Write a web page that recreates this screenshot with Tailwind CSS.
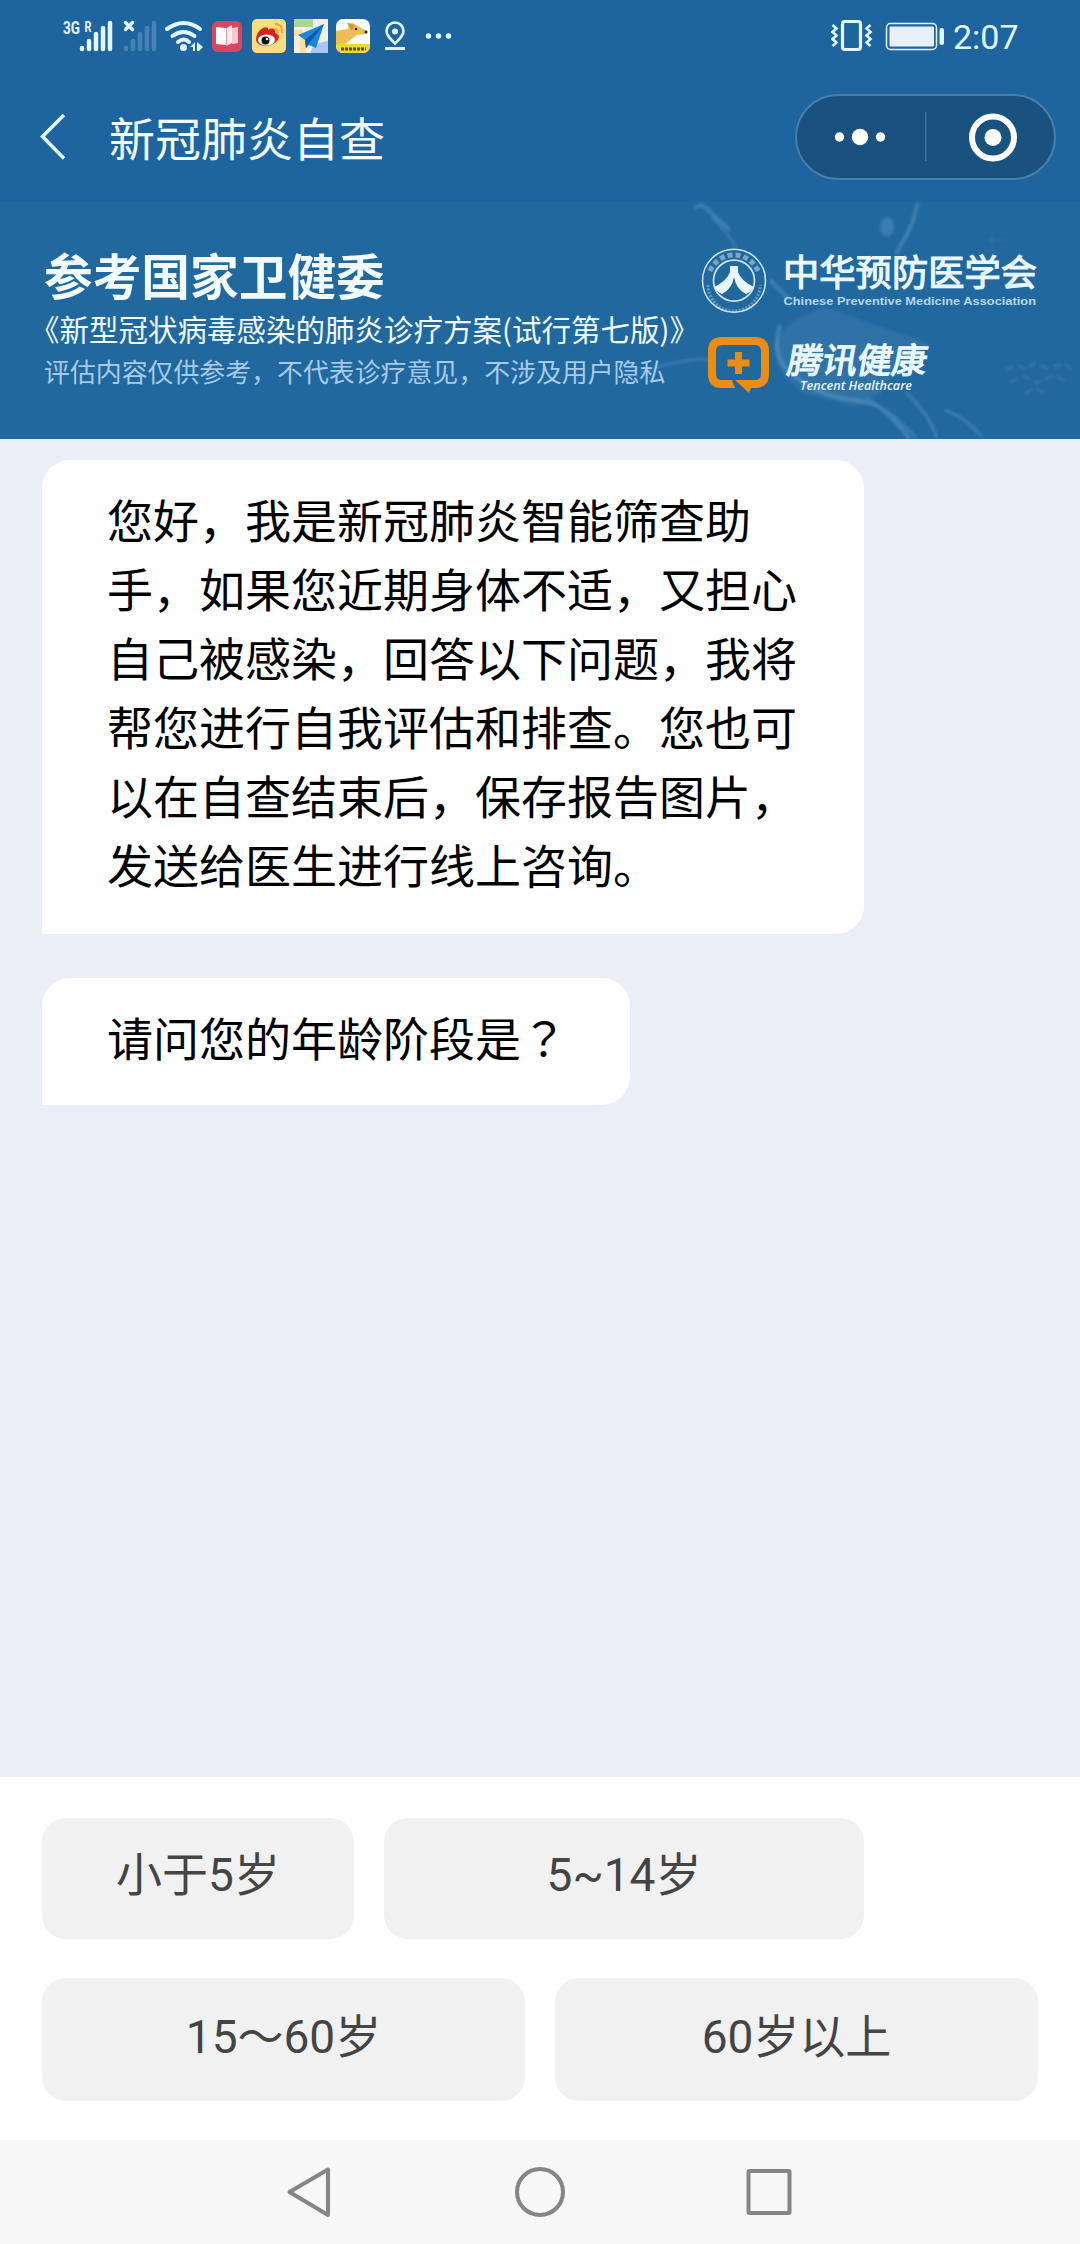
<!DOCTYPE html>
<html lang="zh-CN">

<head>
  <meta charset="UTF-8">
  <title>新冠肺炎自查</title>
  <script src="https://cdn.jsdelivr.net/npm/@tailwindcss/browser@4"></script>
</head>

<body class="bg-[#ebeef6] font-['Noto_Sans_CJK_SC',sans-serif]">
  <div class="w-[1080px] h-[2244px] flex flex-col overflow-hidden">

    <header class="h-[201px] shrink-0 bg-[#1e659f] text-[#f0faff]">
      <!-- status bar -->
      <div class="h-[72px] flex items-center justify-between pl-[60px] pr-[60px]">
        <svg width="396" height="72" viewBox="60 0 396 72" fill="#e2f6ff">
          <g font-family="Roboto" font-weight="700">
            <text x="63" y="34" font-size="18" textLength="17" lengthAdjust="spacingAndGlyphs">3G</text>
            <text x="84.500" y="32" font-size="15" textLength="7" lengthAdjust="spacingAndGlyphs">R</text>
          </g>
          <g stroke="#e2f6ff" stroke-width="4.500" stroke-linecap="round">
            <path d="M82 48v1M89 41v8M96 34v15M103 28v21M110 23v26" />
            <path d="M126 48v1M133 41v8M140 34v15M147 28v21M154 23v26" stroke="#4482b8" />
            <path d="M125.500 22.500l7 7M132.500 22.500l-7 7" stroke-width="3.500" />
          </g>
          <g fill="none" stroke="#e2f6ff" stroke-width="4" stroke-linecap="round">
            <path d="M167 29q17-12 33 0M172.500 36q11-8 22 0M178 42q6-5 11 0" />
          </g>
          <circle cx="183.500" cy="47.500" r="3.500" />
          <path d="M190 47l5-5v9h-2v-4zM197 42l6 5-4 4h-2z" />
          <!-- book -->
          <rect x="212" y="21" width="30" height="31" rx="6" fill="#d9465f" />
          <path d="M216 27l10 1v17l-10-1z" fill="#fff" />
          <path d="M226.500 28l5.500-3v18l-5.500 3z" fill="#fdebee" />
          <path d="M232 28l6-1v16l-6 1z" fill="#f9c9d0" />
          <!-- weibo -->
          <rect x="252" y="19" width="34" height="34" rx="5" fill="#fbdc80" />
          <path d="M263 28c4-2 6 0 5 2 4-3 8-1 7 3 5 1 5 6 1 9-6 6-19 5-20-2 0-5 3-10 7-12z" fill="#d8251c" />
          <ellipse cx="266.500" cy="40" rx="8.500" ry="5.500" fill="#fff" />
          <circle cx="265.500" cy="40.500" r="4" fill="#111" />
          <circle cx="267" cy="39" r="1.200" fill="#fff" />
          <path d="M274 29q4 0 4 4M275 24q8 0 7 9" fill="none" stroke="#eda63a" stroke-width="2" />
          <!-- map -->
          <rect x="294" y="19" width="34" height="34" fill="#f1efe6" />
          <path d="M294 19h19v8h-19z" fill="#a9d98d" />
          <path d="M294 33h9M303 53V34" stroke="#fbdf9b" stroke-width="6" />
          <path d="M314 44l14-3v12h-18z" fill="#a8c8f2" />
          <path d="M298 35l26-11-8 24-7-3-3 3-1-8z" fill="#1d86e0" />
          <path d="M305 40l19-16-14 18-4 6z" fill="#1258a8" />
          <!-- dog -->
          <rect x="336" y="19" width="34" height="34" rx="7" fill="#fffdf6" />
          <path d="M336 31l12-2c0-6 4-7 8-4l11 6-1 3-9 1-12 9h-9z" fill="#eebd55" />
          <path d="M347 23q5 0 8 3l-3 5z" fill="#cf9836" />
          <circle cx="356" cy="29" r="1.200" fill="#222" />
          <circle cx="366" cy="32" r="1.500" fill="#222" />
          <path d="M336 44h34v2a7 7 0 0 1-7 7h-20a7 7 0 0 1-7-7z" fill="#eadb31" />
          <path d="M341 49h25" stroke="#5d5218" stroke-width="3" stroke-dasharray="3 1" />
          <!-- location -->
          <path d="M395 43.500c-5-5-8.500-8-8.500-12.500a8.500 8.500 0 0 1 17 0c0 4.500-3.500 7.500-8.500 12.500z" fill="none"
            stroke="#e2f6ff" stroke-width="2.600" />
          <circle cx="395" cy="31.500" r="3" />
          <rect x="385" y="47" width="20" height="3" />
          <circle cx="428.500" cy="36" r="2.700" />
          <circle cx="438.500" cy="36" r="2.700" />
          <circle cx="448.500" cy="36" r="2.700" />
        </svg>
        <div class="flex items-center gap-[8px]">
          <svg width="114" height="72" viewBox="831 0 114 72" fill="none" stroke="#e2f6ff">
            <rect x="842.500" y="21.500" width="18" height="28" rx="2.500" stroke-width="3.200" />
            <path d="M832.500 25l4 3.500-4 3.500 4 3.500-4 3.500 4 3.500-4 3.500M870.500 25l-4 3.500 4 3.500-4 3.500 4 3.500-4 3.500 4 3.500"
              stroke-width="2.600" />
            <rect x="886.500" y="23.500" width="50" height="26" rx="4" stroke-width="1.500" />
            <rect x="889.500" y="26.500" width="44.500" height="20" rx="1" fill="#e8f0f6" stroke="none" />
            <rect x="939.500" y="28" width="4.500" height="17" rx="2" fill="#e2f6ff" stroke="none" />
          </svg>
          <span class="font-[Roboto] text-[34px] leading-[72px] w-[67px] pt-[2px] text-[#e2f6ff]">2:07</span>
        </div>
      </div>
      <!-- title bar -->
      <div class="h-[129px] flex items-start pl-[38px] pr-[24px] pt-[22px]">
        <svg class="mt-[17px]" width="30" height="52" viewBox="38 111 30 52" fill="none" stroke="#e2f6ff" stroke-width="3.500">
          <path d="M64 115L42.500 136.500 64 158.500" />
        </svg>
        <h1 class="ml-[41px] mt-[8px] text-[46px] leading-[69px] font-normal">新冠肺炎自查</h1>
        <div
          class="ml-auto w-[261px] h-[86px] rounded-full bg-[#19527f] border-2 border-[#4a7fab] flex items-center">
          <svg width="257" height="82" viewBox="797 96 257 82" fill="#fff">
            <circle cx="839.500" cy="137" r="4.700" />
            <circle cx="860" cy="137" r="8.200" />
            <circle cx="880.500" cy="137" r="4.700" />
            <rect x="925" y="112" width="1.500" height="49" fill="#3f739f" />
            <circle cx="993" cy="137.500" r="21" fill="none" stroke="#fff" stroke-width="6" />
            <circle cx="993" cy="137.500" r="8.500" />
          </svg>
        </div>
      </div>
    </header>

    <!-- banner -->
    <section class="relative h-[238px] shrink-0 bg-[#21689f] text-[#f0faff] flex">
      <svg class="absolute left-[640px] top-0" width="440" height="238" viewBox="640 201 440 238" fill="none"
        stroke="#6ba5cf">
        <g class="blur-[1.5px]">
          <path d="M775 345q8-25 50-38l35 12 70 25-40 35-10 15-25 12-50-12q-32-20-30-49z" fill="#5f97c0"
            stroke="none" opacity=".22" />
          <g opacity=".45">
            <path d="M694 208q10-6 16 4l20 18M770 280l20 20M918 203q-6 25-14 36l-8 15" stroke-width="3.500" />
            <path d="M712 218q16 14 24 30M640 372q40-13 70-13" stroke-width="2" />
            <path d="M780 325q-12 35 20 55 25 18 55 20l20 5q12 5 35 34" stroke-width="4" />
            <path d="M866 398q32 18 50 40M905 392q22 18 32 46M945 410q22 8 38 28" stroke-width="2.500" />
          </g>
          <g opacity=".3">
            <path d="M1005 370l12-5 8 4 10-6 12 5 18-4 10 8M1010 382l14-6 12 7 18-8 12 6M1025 394l10-6 14 7"
              stroke-width="2.500" stroke-dasharray="9 4" />
            <path d="M985 240h22M992 232v22" stroke-width="1" />
          </g>
          <ellipse cx="887" cy="227" rx="7" ry="10" fill="#6ba5cf" opacity=".35" stroke="none" />
        </g>
      </svg>
      <div class="relative w-[694px] shrink-0 pl-[44px] pt-[37px] whitespace-nowrap">
        <p class="text-[48.700px] leading-[72px] font-bold">参考国家卫健委</p>
        <p class="text-[29.500px] leading-[36px] -ml-[14px]">《新型冠状病毒感染的肺炎诊疗方案(试行第七版)》</p>
        <p class="text-[25.900px] leading-[36px] mt-[7px] text-[#a6cbe9]">评估内容仅供参考，不代表诊疗意见，不涉及用户隐私</p>
      </div>
      <svg class="relative" width="386" height="238" viewBox="694 201 386 238" fill="#e8f6ff">
        <g fill="none" stroke="#cfe6f6">
          <circle cx="734" cy="280.700" r="31.500" stroke-width="1.500" />
          <path d="M710 271a26 26 0 0 1 48 0" stroke-width="5" stroke-dasharray="5 3" opacity=".5" />
          <path d="M708 285a26 26 0 0 0 52 0" stroke-width="3" stroke-dasharray="2 1.500" opacity=".4" />
          <circle cx="734" cy="280.700" r="20.500" stroke-width="1.700" />
        </g>
        <path d="M730 266h8v6q3 9 16 15-2 4-8 7-10-5-12-17-2 12-12 17-6-3-8-7 13-6 16-15z" />
        <text x="783" y="286" font-size="36.200" textLength="254" stroke="#e8f6ff" stroke-width="1.200">中华预防医学会</text>
        <text x="783.500" y="305" font-family="Liberation Sans" font-size="11.500" font-weight="700" textLength="252.500"
          lengthAdjust="spacingAndGlyphs" fill="#b5d6ee">Chinese Preventive Medicine Association</text>
        <path d="M731 384H722q-10 0-10-10v-23q0-10 10-10h33q10 0 10 10v23q0 10-10 10h-5" fill="none" stroke="#ec8d12"
          stroke-width="8" />
        <path d="M727 380h5l5 8h-10z" fill="#ec8d12" />
        <path d="M735 380h20v8h-4l-2 5z" fill="#ec8d12" />
        <path d="M732 381l9 7v2h-5z" fill="#21689f" />
        <path d="M738.500 352v22M727.500 363h22" stroke="#ec8d12" stroke-width="7" />
        <text transform="translate(786 372.500) skewX(-10)" x="0" y="0" font-size="34.800" textLength="139"
          stroke="#e8f6ff" stroke-width="1.400">腾讯健康</text>
        <text x="800" y="390" font-family="Open Sans" font-style="italic" font-weight="600" font-size="12.500"
          textLength="112" lengthAdjust="spacingAndGlyphs">Tencent Healthcare</text>
      </svg>
    </section>

    <!-- messages -->
    <main class="flex-1 flex flex-col items-start gap-[44px] pl-[42px] pt-[21px] text-[46px] leading-[69px] text-black">
      <div class="w-[822px] h-[474px] pl-[65px] pt-[24px] bg-white rounded-[28px] rounded-bl-none whitespace-nowrap">
        您好，我是新冠肺炎智能筛查助<br>
        手，如果您近期身体不适，又担心<br>
        自己被感染，回答以下问题，我将<br>
        帮您进行自我评估和排查。您也可<br>
        以在自查结束后，保存报告图片，<br>
        发送给医生进行线上咨询。
      </div>
      <div class="w-[588px] h-[127px] pl-[65px] pt-[24px] bg-white rounded-[28px] rounded-bl-none whitespace-nowrap">
        请问您的年龄阶段是<span lang="zh-TW" class="font-['Noto_Sans_CJK_TC',sans-serif]">？</span>
      </div>
    </main>

    <!-- answers -->
    <div
      class="h-[363px] shrink-0 bg-white pt-[41px] px-[42px] flex flex-col gap-[39px] font-[Roboto,'Noto_Sans_CJK_SC',sans-serif] text-[46px] leading-[69px] text-[#444]">
      <div class="flex gap-[30px]">
        <button class="w-[312px] h-[121px] pb-[7px] rounded-[24px] bg-[#f1f1f1]">小于5岁</button>
        <button class="w-[480px] h-[121px] pb-[7px] rounded-[24px] bg-[#f1f1f1]">5~14岁</button>
      </div>
      <div class="flex gap-[30px]">
        <button class="w-[483px] h-[123px] pb-[5px] rounded-[24px] bg-[#f1f1f1]">15～60岁</button>
        <button class="w-[483px] h-[123px] pb-[5px] rounded-[24px] bg-[#f1f1f1]">60岁以上</button>
      </div>
    </div>

    <!-- system navigation -->
    <nav class="h-[104px] shrink-0 bg-[#f7f7f7] flex justify-center">
      <svg width="540" height="104" viewBox="270 2140 540 104" fill="none" stroke="#858585" stroke-width="4"
        stroke-linejoin="round">
        <path d="M328 2169.500v45.500L289.500 2192z" />
        <circle cx="540" cy="2192" r="23" />
        <rect x="748.500" y="2171" width="41" height="42" rx="1" />
      </svg>
    </nav>
  </div>
</body>

</html>
